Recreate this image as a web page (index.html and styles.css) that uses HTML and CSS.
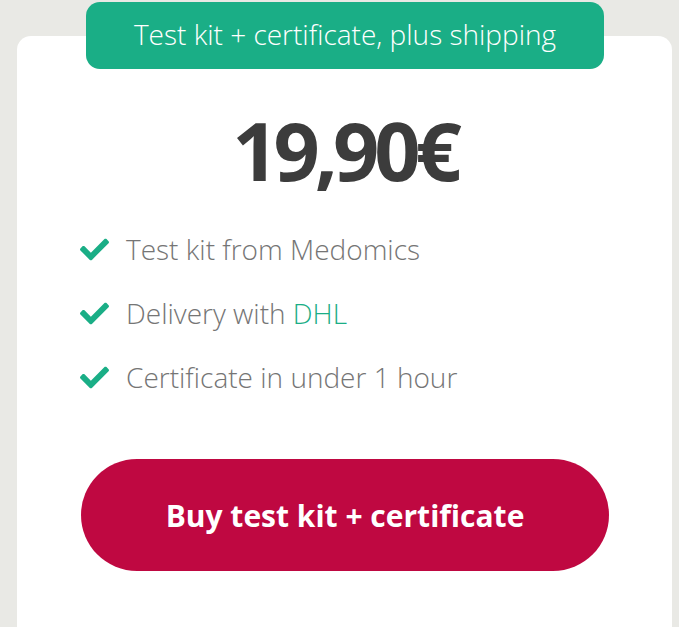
FILE: index.html
```html
<!DOCTYPE html>
<html lang="en">
<head>
  <meta charset="UTF-8">
  <meta name="viewport" content="width=device-width, initial-scale=1.0">
  <title>Test kit + certificate</title>
  <link rel="stylesheet" href="styles.css">
</head>
<body>
  <div class="offer">
    <div class="offer-tag">Test kit + certificate, plus shipping</div>
    <div class="price">19,90€</div>

    <ul class="features">
      <li>
        <svg class="check" viewBox="0 0 512 512"><path d="M173.9 439.4l-166.4-166.4c-10-10-10-26.2 0-36.2l36.2-36.2c10-10 26.2-10 36.2 0L192 312.7 432.1 72.6c10-10 26.2-10 36.2 0l36.2 36.2c10 10 10 26.2 0 36.2l-294.4 294.4c-10 10-26.2 10-36.2 0z"/></svg>
        Test kit from Medomics
      </li>
      <li>
        <svg class="check" viewBox="0 0 512 512"><path d="M173.9 439.4l-166.4-166.4c-10-10-10-26.2 0-36.2l36.2-36.2c10-10 26.2-10 36.2 0L192 312.7 432.1 72.6c10-10 26.2-10 36.2 0l36.2 36.2c10 10 10 26.2 0 36.2l-294.4 294.4c-10 10-26.2 10-36.2 0z"/></svg>
        <span>Delivery with <span class="hl">DHL</span></span>
      </li>
      <li>
        <svg class="check" viewBox="0 0 512 512"><path d="M173.9 439.4l-166.4-166.4c-10-10-10-26.2 0-36.2l36.2-36.2c10-10 26.2-10 36.2 0L192 312.7 432.1 72.6c10-10 26.2-10 36.2 0l36.2 36.2c10 10 10 26.2 0 36.2l-294.4 294.4c-10 10-26.2 10-36.2 0z"/></svg>
        Certificate in under 1 hour
      </li>
    </ul>

    <a class="buy" href="#">Buy test kit + certificate</a>
  </div>
</body>
</html>
```

FILE: styles.css
```css
body {
  margin: 0;
  background: #e9e9e5;
  font-family: "Open Sans", "Liberation Sans", sans-serif;
  overflow: hidden;
}
.offer {
  position: relative;
  margin: 36px 0 0 17px;
  width: 655px;
  height: 591px;
  background: #fff;
  border-radius: 14px 14px 0 0;
  padding-top: 71px;
  box-sizing: border-box;
}
.offer-tag {
  position: absolute;
  top: -34px;
  left: 69px;
  width: 518px;
  height: 67px;
  background: #1aae86;
  color: #fff;
  border-radius: 14px;
  font-size: 28px;
  font-weight: 300;
  display: flex;
  align-items: center;
  justify-content: center;
  padding-bottom: 3px;
  box-sizing: border-box;
}
.price {
  text-align: center;
  font-size: 81px;
  font-weight: 700;
  letter-spacing: -5px;
  color: #3c3c3c;
  line-height: 86px;
}
.features {
  list-style: none;
  margin: 24px 0 0;
  padding: 0 0 0 63px;
}
.features li {
  display: flex;
  align-items: center;
  gap: 17px;
  height: 64px;
  font-size: 28px;
  font-weight: 300;
  color: #757575;
}
.check {
  width: 29px;
  height: 29px;
  fill: #1aae86;
}
.hl {
  color: #1aae86;
}
.buy {
  display: flex;
  align-items: center;
  justify-content: center;
  margin: 50px 0 0 64px;
  width: 528px;
  height: 112px;
  border-radius: 56px;
  background: #bf0841;
  color: #fff;
  text-decoration: none;
  font-size: 30px;
  font-weight: 700;
}
```
